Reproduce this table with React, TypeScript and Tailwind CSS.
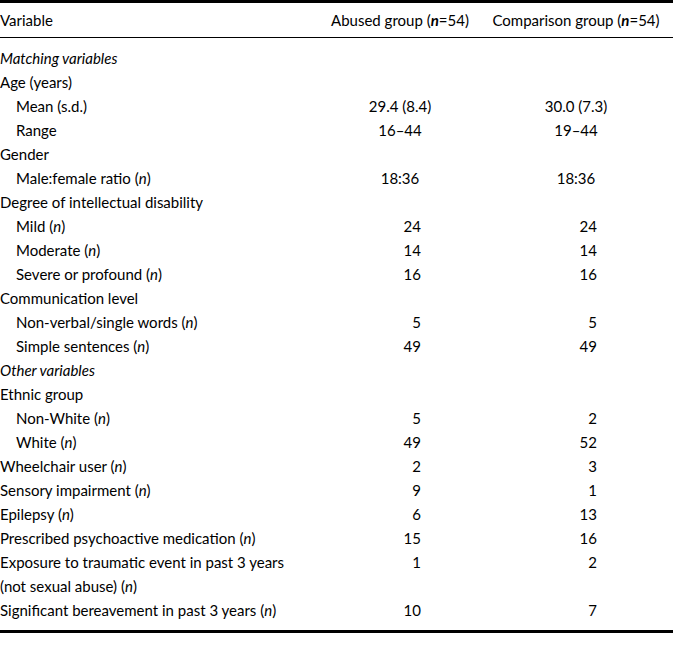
import { ReactNode } from 'react';

// ── DATA ───────────────────────────────────────────────
type Kind = 'section' | 'group' | 'item' | 'top';
type Row = { kind: Kind; label: ReactNode; a?: string; b?: string; mid?: boolean };

const N = () => <i>n</i>;

const rows: Row[] = [
  { kind: 'section', label: 'Matching variables' },
  { kind: 'group', label: 'Age (years)' },
  { kind: 'item', label: 'Mean (s.d.)', a: '29.4 (8.4)', b: '30.0 (7.3)', mid: true },
  { kind: 'item', label: 'Range', a: '16–44', b: '19–44', mid: true },
  { kind: 'group', label: 'Gender' },
  { kind: 'item', label: <>Male:female ratio (<N />)</>, a: '18:36', b: '18:36', mid: true },
  { kind: 'group', label: 'Degree of intellectual disability' },
  { kind: 'item', label: <>Mild (<N />)</>, a: '24', b: '24' },
  { kind: 'item', label: <>Moderate (<N />)</>, a: '14', b: '14' },
  { kind: 'item', label: <>Severe or profound (<N />)</>, a: '16', b: '16' },
  { kind: 'group', label: 'Communication level' },
  { kind: 'item', label: <>Non-verbal/single words (<N />)</>, a: '5', b: '5' },
  { kind: 'item', label: <>Simple sentences (<N />)</>, a: '49', b: '49' },
  { kind: 'section', label: 'Other variables' },
  { kind: 'group', label: 'Ethnic group' },
  { kind: 'item', label: <>Non-White (<N />)</>, a: '5', b: '2' },
  { kind: 'item', label: <>White (<N />)</>, a: '49', b: '52' },
  { kind: 'top', label: <>Wheelchair user (<N />)</>, a: '2', b: '3' },
  { kind: 'top', label: <>Sensory impairment (<N />)</>, a: '9', b: '1' },
  { kind: 'top', label: <>Epilepsy (<N />)</>, a: '6', b: '13' },
  { kind: 'top', label: <>Prescribed psychoactive medication (<N />)</>, a: '15', b: '16' },
  { kind: 'top', label: <>Exposure to traumatic event in past 3 years<br />(not sexual abuse) (<N />)</>, a: '1', b: '2' },
  { kind: 'top', label: <>Significant bereavement in past 3 years (<N />)</>, a: '10', b: '7' },
];

// ── CELLS ──────────────────────────────────────────────
function Num({ v, mid }: { v?: string; mid?: boolean }) {
  if (!v) return <div />;
  return (
    <div className="flex justify-center h-[24px] items-center">
      {mid ? <span>{v}</span> : <span className="w-[42px] text-right">{v}</span>}
    </div>
  );
}

export default function App() {
  return (
    <div className="w-[673px] bg-white text-black text-[15px] leading-[24px]" style={{ fontFamily: 'Lato, "Open Sans", sans-serif' }}>
      <div className="border-t-[3px] border-black" />
      <div className="grid grid-cols-[320px_160px_192px] h-[35px] items-center border-b border-black">
        <div>Variable</div>
        <div className="text-center">Abused group (<b><i>n</i></b>=54)</div>
        <div className="text-center">Comparison group (<b><i>n</i></b>=54)</div>
      </div>
      <div className="pt-[8px] pb-[8px]">
        {rows.map((r, i) => (
          <div key={i} className="grid grid-cols-[320px_160px_192px] items-start">
            <div className={r.kind === 'section' ? 'italic' : r.kind === 'item' ? 'pl-[16px]' : ''}>{r.label}</div>
            <Num v={r.a} mid={r.mid} />
            <Num v={r.b} mid={r.mid} />
          </div>
        ))}
      </div>
      <div className="border-t-[3px] border-black" />
    </div>
  );
}
